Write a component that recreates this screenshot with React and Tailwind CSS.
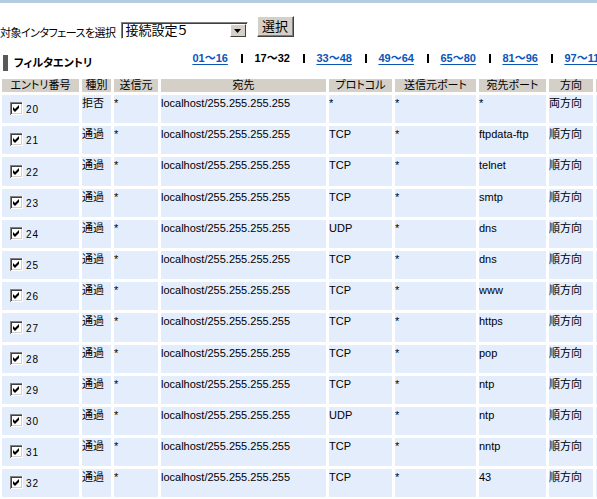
import React from "react";

const rows = [
  ["20", "拒否", "*", "localhost/255.255.255.255", "*", "*", "*", "両方向"],
  ["21", "通過", "*", "localhost/255.255.255.255", "TCP", "*", "ftpdata-ftp", "順方向"],
  ["22", "通過", "*", "localhost/255.255.255.255", "TCP", "*", "telnet", "順方向"],
  ["23", "通過", "*", "localhost/255.255.255.255", "TCP", "*", "smtp", "順方向"],
  ["24", "通過", "*", "localhost/255.255.255.255", "UDP", "*", "dns", "順方向"],
  ["25", "通過", "*", "localhost/255.255.255.255", "TCP", "*", "dns", "順方向"],
  ["26", "通過", "*", "localhost/255.255.255.255", "TCP", "*", "www", "順方向"],
  ["27", "通過", "*", "localhost/255.255.255.255", "TCP", "*", "https", "順方向"],
  ["28", "通過", "*", "localhost/255.255.255.255", "TCP", "*", "pop", "順方向"],
  ["29", "通過", "*", "localhost/255.255.255.255", "TCP", "*", "ntp", "順方向"],
  ["30", "通過", "*", "localhost/255.255.255.255", "UDP", "*", "ntp", "順方向"],
  ["31", "通過", "*", "localhost/255.255.255.255", "TCP", "*", "nntp", "順方向"],
  ["32", "通過", "*", "localhost/255.255.255.255", "TCP", "*", "43", "順方向"],
];

const headers = ["エントリ番号", "種別", "送信元", "宛先", "プロトコル", "送信元ポート", "宛先ポート", "方向", ""];

const pages = ["01～16", "17～32", "33～48", "49～64", "65～80", "81～96", "97～112"];

function CheckBox() {
  return (
    <svg width="13" height="13" viewBox="0 0 13 13" className="shrink-0">
      <rect x="0" y="0" width="13" height="13" fill="#ffffff" />
      <path d="M0 0H13V1H1V13H0Z" fill="#808080" />
      <path d="M1 1H12V2H2V12H1Z" fill="#404040" />
      <path d="M12 1V12H1V13H13V0H12Z" fill="#ffffff" />
      <path d="M11 2V11H2V12H12V2Z" fill="#d4d0c8" />
      <path d="M3 5L5 7L9 3L9 6L5 10L3 8Z" fill="#000000" />
    </svg>
  );
}

export default function App() {
  return (
    <div className="w-[597px] h-[499px] overflow-hidden bg-white text-black font-['Liberation_Sans','Noto_Sans_CJK_JP',sans-serif] [font-feature-settings:'palt']">
      <div className="h-[3px] bg-[#b5cbe0]" />

      {/* インタフェース選択 */}
      <div className="flex items-start h-[49px]">
        <span className="mt-[23px] text-[11px] leading-[14px] tracking-[-0.5px] whitespace-nowrap">対象インタフェースを選択</span>
        <div className="mt-[19px] ml-[5px] w-[127px] h-[17px] flex items-stretch bg-white border border-t-[#808080] border-l-[#808080] border-r-[#ffffff] border-b-[#ffffff] shadow-[inset_1px_1px_#404040]">
          <span className="flex-1 pl-[4px] text-[13px] leading-[15px]">接続設定５</span>
          <span className="w-[16px] m-[1px] flex items-center justify-center bg-[#d4d0c8] border border-t-white border-l-white border-r-[#404040] border-b-[#404040]">
            <svg width="7" height="4" viewBox="0 0 7 4"><path d="M0 0H7L3.5 4Z" fill="#000" /></svg>
          </span>
        </div>
        <button className="mt-[13px] ml-[9px] w-[37px] h-[21px] bg-[#d4d0c8] text-[13px] leading-[15px] border border-t-white border-l-white border-r-[#404040] border-b-[#404040] shadow-[inset_-1px_-1px_#808080]">
          選択
        </button>
      </div>

      {/* タイトルとページリンク */}
      <div className="flex items-start h-[27px]">
        <div className="flex items-center mt-[3px] ml-[3px]">
          <span className="w-[5px] h-[16px] bg-[#595959]" />
          <span className="ml-[6px] text-[11px] font-bold leading-[14px] whitespace-nowrap">フィルタエントリ</span>
        </div>
        <div className="flex items-center ml-[100px] text-[11px] font-bold leading-[12px] whitespace-nowrap">
          {pages.map((p, i) => (
            <div key={p} className="flex items-center">
              <span className={`w-[49px] ${i === 1 ? "text-black" : "text-[#0b55b8] underline underline-offset-2"}`}>{p}</span>
              {i < pages.length - 1 && <span className="w-[2px] h-[9px] bg-black mr-[11px]" />}
            </div>
          ))}
        </div>
      </div>

      {/* テーブル */}
      <div className="ml-[2px] grid grid-cols-[77px_29px_44px_165px_63px_81px_67px_44px_40px] gap-x-[3px] gap-y-[3px] text-[11px]">
        {headers.map((h, i) => (
          <div key={i} className="h-[13px] bg-[#d4d0c8] text-center leading-[13px] whitespace-nowrap">{h}</div>
        ))}
        {rows.map((r) => (
          <React.Fragment key={r[0]}>
            <div className="h-[28.2px] bg-[#e4edfc] flex items-end pl-[8px] pb-[8px]">
              <CheckBox />
              <span className="ml-[3px] text-[10px] leading-[10px] tracking-[1px]">{r[0]}</span>
            </div>
            {r.slice(1).map((c, j) => (
              <div key={j} className="h-[28.2px] bg-[#e4edfc] pt-[2px] leading-[13px] whitespace-nowrap overflow-hidden">
                {c}
              </div>
            ))}
            <div className="h-[28.2px] bg-[#e4edfc]" />
          </React.Fragment>
        ))}
      </div>
    </div>
  );
}
